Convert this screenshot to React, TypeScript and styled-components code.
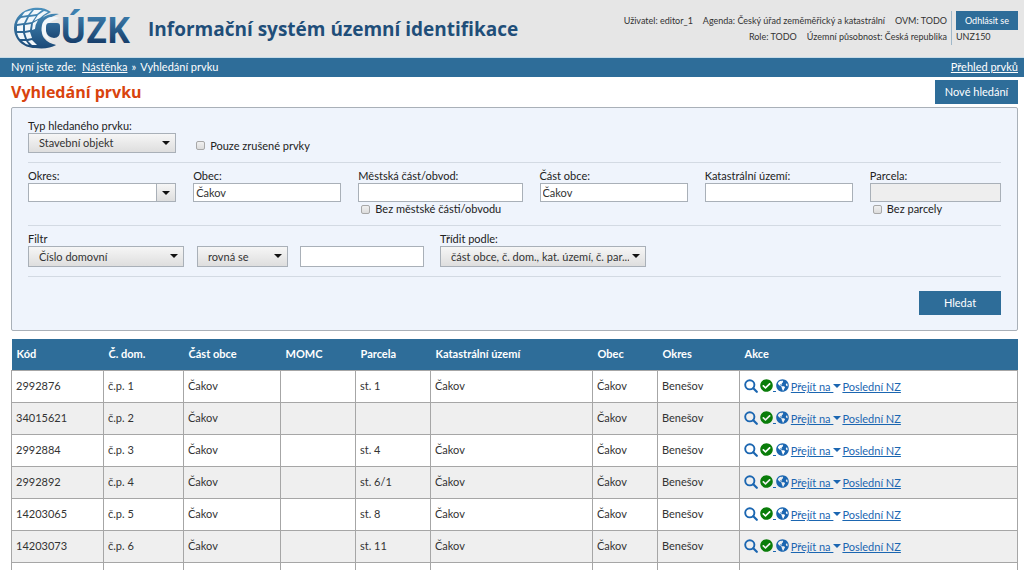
import React from "react";
import styled, { createGlobalStyle } from "styled-components";
import { FaCheckCircle, FaGlobeAmericas } from "react-icons/fa";

const color = {
  brand: "#2e6d99",
  brandDark: "#1f4e79",
  header: "#e6e6e6",
  panel: "#eff4fc",
  line: "#d3dae3",
  border: "#a9b0b8",
  grid: "#a6a6a6",
  stripe: "#efefef",
  link: "#1b66b1",
  accent: "#d9430d",
  text: "#333333",
};

const GlobalStyle = createGlobalStyle`
  *, *::before, *::after { box-sizing: border-box; }
  body {
    margin: 0;
    background: #ffffff;
    color: ${color.text};
    font-family: Lato, "Open Sans", sans-serif;
    font-size: 11px;
    line-height: 16px;
  }
  button, input, select { font: inherit; color: inherit; margin: 0; border-radius: 0; }
`;

const Header = styled.header`
  display: flex;
  align-items: center;
  min-height: 58px;
  padding: 0 6px 0 14px;
  background: ${color.header};
  border-bottom: 1px solid #c6dbe8;
`;

const LogoLink = styled.a`
  display: flex;
  flex: none;
  margin-right: 16px;
  text-decoration: none;
  svg { overflow: visible; }
`;

const AppName = styled.h1`
  flex: 1;
  margin: 0;
  color: ${color.brandDark};
  font-family: "Open Sans", sans-serif;
  font-size: 19px;
  line-height: 28px;
  font-weight: 700;
  white-space: nowrap;
`;

const Session = styled.div`
  display: flex;
  align-self: flex-start;
  margin-top: 11px;
  font-size: 9px;
`;

const SessionInfo = styled.div`
  padding-right: 4px;
  margin-right: 4px;
  border-right: 1px solid #9fb8ca;
  text-align: right;
`;

const InfoLine = styled.div`
  display: flex;
  justify-content: flex-end;
  gap: 10px;
  line-height: 16px;
  padding-top: 2px;
  & + & { padding-top: 0; }
  white-space: nowrap;
`;

const SessionSide = styled.div`
  line-height: 14px;
`;

const Button = styled.button<{ $size?: "small" | "wide" }>`
  display: block;
  height: ${(p) => (p.$size === "small" ? 19 : 24)}px;
  width: ${(p) => (p.$size === "small" ? "62px" : p.$size === "wide" ? "82px" : "83px")};
  padding: 0;
  border: 0;
  background: ${color.brand};
  color: #ffffff;
  text-align: center;
  white-space: nowrap;
  cursor: pointer;
`;

const TrailBar = styled.nav`
  display: flex;
  justify-content: space-between;
  padding: 1px 6px 2px 11px;
  background: ${color.brand};
  color: #ffffff;
  a { color: inherit; }
`;

const Trail = styled.div`
  display: flex;
  gap: 4px;
  a { margin-left: 2px; }
`;

const Main = styled.main`
  padding: 0 6px 0 11px;
`;

const TitleRow = styled.div`
  display: flex;
  justify-content: space-between;
  align-items: center;
  padding: 3px 0;
`;

const PageTitle = styled.h2`
  margin: 0;
  color: ${color.accent};
  font-family: "Open Sans", sans-serif;
  font-size: 16px;
  line-height: 24px;
  font-weight: 700;
`;

const SearchForm = styled.form`
  padding: 10px 16px 15px;
  border: 1px solid ${color.border};
  border-radius: 2px;
  background: ${color.panel};
`;

const Section = styled.div`
  padding-bottom: 9px;
  margin-bottom: 5px;
  border-bottom: 1px solid ${color.line};
`;

const FieldGrid = styled.div`
  display: grid;
  grid-template-columns: 148fr 148fr 164fr 148fr 148fr 131fr;
  column-gap: 17px;
`;

const FilterRow = styled.div`
  display: flex;
  align-items: flex-end;
`;

const Field = styled.div<{ $width?: number; $gap?: number }>`
  min-width: 0;
  width: ${(p) => (p.$width ? `${p.$width}px` : "auto")};
  margin-right: ${(p) => p.$gap ?? 0}px;
`;

const Label = styled.label`
  display: block;
  line-height: 15px;
  color: #222222;
  white-space: nowrap;
`;

const TextInput = styled.input`
  display: block;
  width: 100%;
  height: 19px;
  padding: 0 2px;
  border: 1px solid ${color.border};
  background: #ffffff;
  &:disabled { background: #eeeeee; }
  ${FilterRow} & { height: 21px; }
`;

const Combo = styled.div`
  display: flex;
`;

const ComboButton = styled.button`
  display: flex;
  flex: none;
  align-items: center;
  justify-content: center;
  width: 19px;
  height: 19px;
  padding: 0;
  border: 1px solid ${color.border};
  border-left: 0;
  background: linear-gradient(#f6f6f6, #dedede);
`;

const Arrow = styled.span`
  width: 0;
  height: 0;
  border: 4px solid transparent;
  border-top-color: #111111;
  border-bottom: 0;
`;

const SelectBox = styled.div`
  position: relative;
  ${Arrow} {
    position: absolute;
    right: 6px;
    top: 8px;
    pointer-events: none;
  }
`;

const SelectInput = styled.select`
  display: block;
  appearance: none;
  width: 100%;
  height: 20px;
  padding: 0 16px 0 10px;
  border: 1px solid ${color.border};
  background: linear-gradient(#f6f6f6, #dedede);
  ${FilterRow} & { height: 21px; }
`;

const CheckLabel = styled.label<{ $low?: boolean }>`
  display: flex;
  align-items: center;
  gap: 5px;
  padding-left: 3px;
  padding-top: ${(p) => (p.$low ? 20 : 0)}px;
  line-height: 14px;
  color: #222222;
  white-space: nowrap;
`;

const CheckBox = styled.input`
  appearance: none;
  flex: none;
  width: 9px;
  height: 9px;
  border: 1px solid #a8a8a8;
  border-radius: 2px;
  background: linear-gradient(#f0f0f0, #dcdcdc);
  &:checked { background: ${color.brand}; }
`;

const Actions = styled.div`
  display: flex;
  justify-content: flex-end;
  padding-top: 9px;
`;

const Results = styled.table`
  width: 100%;
  margin-top: 8px;
  border-collapse: collapse;
  table-layout: fixed;
`;

const HeadCell = styled.th<{ $width?: number }>`
  width: ${(p) => (p.$width ? `${p.$width}px` : "auto")};
  height: 31px;
  padding: 0 5px;
  background: ${color.brand};
  color: #ffffff;
  font-weight: 700;
  text-align: left;
  white-space: nowrap;
`;

const Row = styled.tr`
  &:nth-child(even) { background: ${color.stripe}; }
`;

const Cell = styled.td`
  height: 32px;
  padding: 0 4px;
  border: 1px solid ${color.grid};
  white-space: nowrap;
`;

const RowActions = styled.div`
  display: flex;
  align-items: center;
  color: ${color.link};
  svg { display: block; flex: none; }
`;

const IconLink = styled.a<{ $tone?: string; $gap?: number }>`
  display: flex;
  align-items: flex-end;
  margin-right: ${(p) => p.$gap ?? 2}px;
  padding-bottom: 1px;
  color: ${color.link};
  svg { color: ${(p) => p.$tone ?? color.link}; }
  span { line-height: 13px; text-decoration: underline; }
`;

const TextLink = styled.a`
  padding-top: 2px;
  color: ${color.link};
`;

const MenuCaret = styled.span`
  width: 0;
  height: 0;
  margin-right: 1px;
  border: 4px solid transparent;
  border-top-color: ${color.link};
  border-bottom: 0;
`;

function Logo() {
  return (
    <svg width="118" height="44" viewBox="0 0 118 44" role="img" aria-label="ČÚZK">
      <defs>
        <linearGradient id="globe" gradientUnits="userSpaceOnUse" x1="0" y1="1" x2="0" y2="41">
          <stop offset="0" stopColor="#4a90bd" />
          <stop offset="1" stopColor="#1b4a78" />
        </linearGradient>
        <linearGradient id="letters" gradientUnits="userSpaceOnUse" x1="0" y1="6" x2="0" y2="37">
          <stop offset="0" stopColor="#3d80b0" />
          <stop offset="1" stopColor="#163c68" />
        </linearGradient>
      </defs>
      <path
        d="M37 5C32 1 26 0 19 1C8 3 0 11 0 21C0 32 9 41 21 41C30 42 37 41 42 38C37 38 33 37 30 34L24 20L30 9Z"
        fill="url(#globe)"
      />
      <g fill="#f1f7fb">
        <path d="M11 5L18 3L14 8L8 9Q9 7 11 5Z" />
        <path d="M20 3L28 3L23 7L16 8Z" />
        <path d="M7 11L13 10L10 16L3 17Q4 13 7 11Z" />
        <path d="M15 10L22 9L18 15L12 16Z" />
        <path d="M24 8L30 4L34 5Q29 8 26 11L20 14Z" />
        <path d="M3 19L9 18L9 24L3 24Z" />
        <path d="M11 18L17 17L16 23L11 24Z" />
        <path d="M19 16L24 13Q21 18 21 22L18 23Z" />
        <path d="M3 26L9 26L11 32L6 32Q4 30 3 26Z" />
        <path d="M11 26L16 25L18 31L13 32Z" />
        <path d="M8 34L12 34L15 38Q11 37 8 34Z" />
        <path d="M14 34L18 33L23 38L18 38Z" />
      </g>
      <path
        d="M45 7C33 5 23 12 22 23C22 35 33 41 42 38C38 37 33 35 30 31C25 23 28 12 45 7Z"
        fill="url(#globe)"
      />
      <path
        d="M45 11C37 8 30 11 28 18C26 26 31 33 38 34C34 31 32 28 32 23C32 18 36 14 45 11Z"
        fill="#f1f7fb"
      />
      <path d="M35 16H43Q46 16 46 19V24Q46 31 40 31Q33 30 32 24V20Q32 16 35 16Z" fill="url(#letters)" />
      <text
        x="46"
        y="36"
        fill="url(#letters)"
        fontFamily="'Open Sans', sans-serif"
        fontWeight="700"
        fontSize="35"
      >
        ÚZK
      </text>
    </svg>
  );
}

function SearchIcon() {
  return (
    <svg width="14" height="14" viewBox="0 0 14 14" fill="none" stroke="currentColor" aria-hidden="true">
      <circle cx="5.8" cy="5.8" r="4.6" strokeWidth="1.9" />
      <path d="M9.3 9.3L12.8 12.8" strokeWidth="2.2" strokeLinecap="round" />
    </svg>
  );
}

function Select({ id, label, value }: { id: string; label?: string; value: string }) {
  return (
    <SelectBox>
      <SelectInput id={id} aria-label={label} defaultValue={value}>
        <option>{value}</option>
      </SelectInput>
      <Arrow />
    </SelectBox>
  );
}

function TextField({
  id,
  label,
  value,
  disabled,
  children,
}: {
  id: string;
  label: string;
  value?: string;
  disabled?: boolean;
  children?: React.ReactNode;
}) {
  return (
    <Field>
      <Label htmlFor={id}>{label}</Label>
      <TextInput id={id} type="text" defaultValue={value} disabled={disabled} />
      {children}
    </Field>
  );
}

const columns: { title: string; width?: number }[] = [
  { title: "Kód", width: 92 },
  { title: "Č. dom.", width: 80 },
  { title: "Část obce", width: 97 },
  { title: "MOMC", width: 75 },
  { title: "Parcela", width: 75 },
  { title: "Katastrální území", width: 162 },
  { title: "Obec", width: 65 },
  { title: "Okres", width: 82 },
  { title: "Akce" },
];

const rows = [
  { code: "2992876", house: "č.p. 1", parcel: "st. 1", cadastre: "Čakov" },
  { code: "34015621", house: "č.p. 2", parcel: "", cadastre: "" },
  { code: "2992884", house: "č.p. 3", parcel: "st. 4", cadastre: "Čakov" },
  { code: "2992892", house: "č.p. 4", parcel: "st. 6/1", cadastre: "Čakov" },
  { code: "14203065", house: "č.p. 5", parcel: "st. 8", cadastre: "Čakov" },
  { code: "14203073", house: "č.p. 6", parcel: "st. 11", cadastre: "Čakov" },
  { code: "", house: "", parcel: "", cadastre: "" },
];

export default function App() {
  return (
    <>
      <GlobalStyle />
      <Header>
        <LogoLink href="#">
          <Logo />
        </LogoLink>
        <AppName>Informační systém územní identifikace</AppName>
        <Session>
          <SessionInfo>
            <InfoLine>
              <span>Uživatel: editor_1</span>
              <span>Agenda: Český úřad zeměměřický a katastrální</span>
              <span>OVM: TODO</span>
            </InfoLine>
            <InfoLine>
              <span>Role: TODO</span>
              <span>Územní působnost: Česká republika</span>
            </InfoLine>
          </SessionInfo>
          <SessionSide>
            <Button type="button" $size="small">Odhlásit se</Button>
            UNZ150
          </SessionSide>
        </Session>
      </Header>
      <TrailBar>
        <Trail>
          <span>Nyní jste zde:</span>
          <a href="#">Nástěnka</a>
          <span>»</span>
          <span>Vyhledání prvku</span>
        </Trail>
        <a href="#">Přehled prvků</a>
      </TrailBar>
      <Main>
        <TitleRow>
          <PageTitle>Vyhledání prvku</PageTitle>
          <Button type="button">Nové hledání</Button>
        </TitleRow>
        <SearchForm>
          <Section>
            <FieldGrid>
              <Field>
                <Label htmlFor="type">Typ hledaného prvku:</Label>
                <Select id="type" value="Stavební objekt" />
              </Field>
              <CheckLabel $low>
                <CheckBox type="checkbox" />
                Pouze zrušené prvky
              </CheckLabel>
            </FieldGrid>
          </Section>
          <Section>
            <FieldGrid>
              <Field>
                <Label htmlFor="district">Okres:</Label>
                <Combo>
                  <TextInput id="district" type="text" />
                  <ComboButton type="button" aria-label="Okres">
                    <Arrow />
                  </ComboButton>
                </Combo>
              </Field>
              <TextField id="town" label="Obec:" value="Čakov" />
              <TextField id="borough" label="Městská část/obvod:">
                <CheckLabel>
                  <CheckBox type="checkbox" />
                  Bez městské části/obvodu
                </CheckLabel>
              </TextField>
              <TextField id="part" label="Část obce:" value="Čakov" />
              <TextField id="cadastre" label="Katastrální území:" />
              <TextField id="parcel" label="Parcela:" disabled>
                <CheckLabel>
                  <CheckBox type="checkbox" />
                  Bez parcely
                </CheckLabel>
              </TextField>
            </FieldGrid>
          </Section>
          <Section>
            <FilterRow>
              <Field $width={156} $gap={13}>
                <Label htmlFor="filter">Filtr</Label>
                <Select id="filter" value="Číslo domovní" />
              </Field>
              <Field $width={91} $gap={12}>
                <Select id="operator" label="Operátor" value="rovná se" />
              </Field>
              <Field $width={124} $gap={16}>
                <TextInput type="text" aria-label="Hodnota" />
              </Field>
              <Field $width={206}>
                <Label htmlFor="sort">Třídit podle:</Label>
                <Select id="sort" value="část obce, č. dom., kat. území, č. par..." />
              </Field>
            </FilterRow>
          </Section>
          <Actions>
            <Button type="button" $size="wide">Hledat</Button>
          </Actions>
        </SearchForm>
        <Results>
          <thead>
            <tr>
              {columns.map((c) => (
                <HeadCell key={c.title} $width={c.width}>{c.title}</HeadCell>
              ))}
            </tr>
          </thead>
          <tbody>
            {rows.map((r) => (
              <Row key={r.code}>
                <Cell>{r.code}</Cell>
                <Cell>{r.house}</Cell>
                <Cell>{r.code && "Čakov"}</Cell>
                <Cell />
                <Cell>{r.parcel}</Cell>
                <Cell>{r.cadastre}</Cell>
                <Cell>{r.code && "Čakov"}</Cell>
                <Cell>{r.code && "Benešov"}</Cell>
                <Cell>
                  {r.code && (
                    <RowActions>
                      <IconLink href="#" aria-label="Detail"><SearchIcon /></IconLink>
                      <IconLink href="#" aria-label="Stav" $tone="#0a7d0a" $gap={0}>
                        <FaCheckCircle size={13} />
                        <span>&nbsp;</span>
                      </IconLink>
                      <IconLink href="#" aria-label="Mapa"><FaGlobeAmericas size={13} /></IconLink>
                      <TextLink href="#">Přejít na&nbsp;</TextLink>
                      <MenuCaret />
                      <TextLink href="#">Poslední NZ</TextLink>
                    </RowActions>
                  )}
                </Cell>
              </Row>
            ))}
          </tbody>
        </Results>
      </Main>
    </>
  );
}
